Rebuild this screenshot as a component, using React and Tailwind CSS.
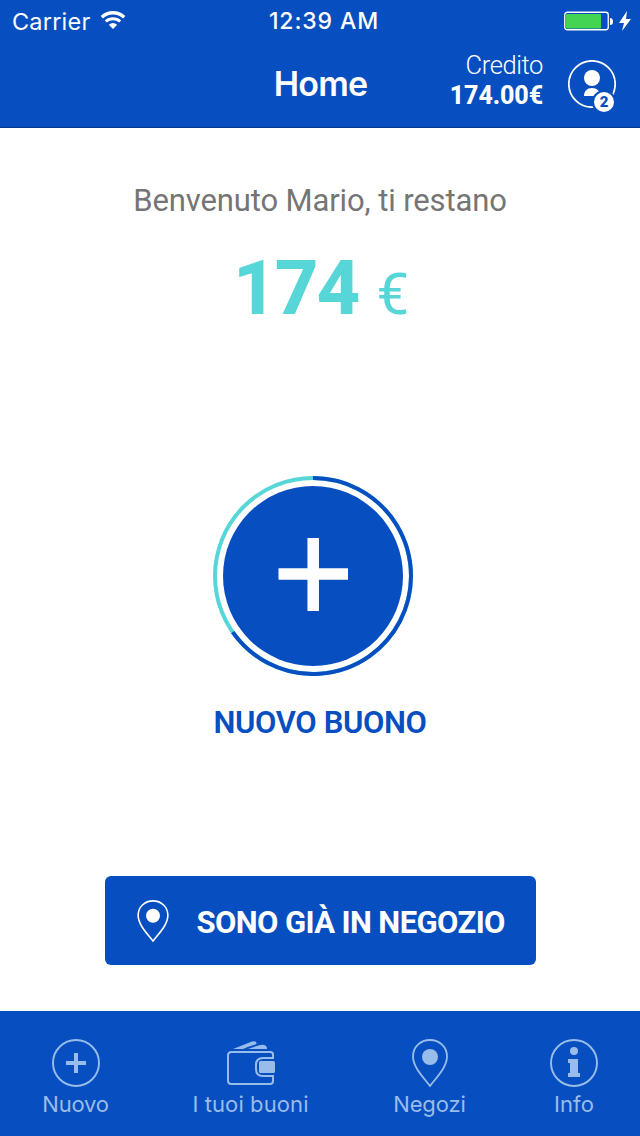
function Pin({ className }) {
  return (
    <svg className={className} viewBox="0 0 36 48" fill="none">
      <path d="M18 47 C12 39 1 28.500 1 17.500 C1 8 8.500 1 18 1 C27.500 1 35 8 35 17.500 C35 28.500 24 39 18 47 Z" stroke="currentColor" strokeWidth="1.800" />
      <circle cx="18" cy="18" r="8" fill="currentColor" />
    </svg>
  );
}

function StatusBar() {
  return (
    <div className="grid h-10 grid-cols-3 items-center pl-3 pr-2 font-['Inter',sans-serif] text-white">
      <div className="flex items-center gap-2.5">
        <span className="text-[23.500px] leading-[41px] tracking-[0.200px]">Carrier</span>
        <svg className="mb-0.5 h-[18px] w-[26px]" viewBox="0 0 26 18" fill="none">
          <path d="M1.800 6.300 A16 16 0 0 1 24.200 6.300" stroke="currentColor" strokeWidth="3.300" />
          <path d="M5.800 10.500 A10.500 10.500 0 0 1 20.200 10.500" stroke="currentColor" strokeWidth="3" />
          <path d="M13 18 L8.800 13.700 Q13 10.300 17.200 13.700 Z" fill="currentColor" />
        </svg>
      </div>
      <span className="whitespace-nowrap pl-1 text-center text-[23px] font-medium leading-[42px] tracking-[0.900px]">12:39 AM</span>
      <div className="flex items-center justify-end">
        <svg className="h-5 w-[50px]" viewBox="0 0 50 20" fill="none">
          <rect x=".75" y="1.250" width="43.500" height="17.500" rx="2.500" stroke="white" strokeWidth="1.300" />
          <rect x="2" y="3" width="35" height="14.500" rx="1" fill="#43d551" />
          <path d="M46 7 Q49 7 49 10.500 Q49 14 46 14 Z" fill="white" />
        </svg>
        <svg className="ml-1 h-5 w-3.5" viewBox="0 0 14 20">
          <path d="M9 0 L1 12 H6 L4 20 L13 8 H8 Z" fill="white" />
        </svg>
      </div>
    </div>
  );
}

function Header() {
  return (
    <header className="h-32 border-b border-[#063888] bg-[#074ec0] text-white">
      <StatusBar />
      <div className="grid h-[87px] grid-cols-[1fr_96px_1fr] items-start">
        <div />
        <h1 className="pl-px pt-[23px] text-center font-['Inter',sans-serif] text-[34px] font-semibold leading-[42px] tracking-[-0.800px]">Home</h1>
        <div className="flex justify-end pr-6 font-['Roboto',sans-serif]">
          <div className="mr-[25px] pt-2.5 text-right">
            <div className="text-[25.500px] font-light leading-[30px] tracking-[-0.400px]">Credito</div>
            <div className="mt-px text-[25px] font-extrabold leading-[30px] tracking-[-0.100px]">174.00€</div>
          </div>
          <div className="relative mt-5 size-12">
            <svg className="size-12" viewBox="0 0 48 48" fill="none">
              <circle cx="24" cy="24" r="23.200" stroke="white" strokeWidth="1.700" />
              <circle cx="24" cy="18" r="8" fill="white" />
              <path d="M16 36 C16 31 19 28 24 28 C29 28 32 31 32 36 Z" fill="white" />
            </svg>
            <span className="absolute left-[24px] top-[30px] flex size-6 items-center justify-center rounded-full border-2 border-[#074ec0] bg-white pt-px text-[15px] font-black text-[#074ec0]">2</span>
          </div>
        </div>
      </div>
    </header>
  );
}

function Tab({ label, children, className }) {
  return (
    <div className={"flex flex-col items-center " + className}>
      <div className="flex h-12 items-center">{children}</div>
      <span className="mt-[3px] whitespace-nowrap text-[22px] leading-[28px]">{label}</span>
    </div>
  );
}

export default function App() {
  return (
    <div className="flex h-[1136px] w-[640px] flex-col overflow-hidden bg-white">
      <Header />
      <main className="flex flex-1 flex-col items-center font-['Roboto',sans-serif]">
        <p className="mt-[53px] whitespace-nowrap text-[31px] leading-10 tracking-[-0.120px] text-[#757575]">Benvenuto Mario, ti restano</p>
        <div className="ml-0.5 mt-[27px] flex h-20 items-baseline gap-[18px] leading-[80px] text-[#57d6d8]">
          <span className="text-[76px] font-extrabold tracking-[-2px]">174</span>
          <span className="text-[58px]">€</span>
        </div>
        <svg className="mr-3.5 mt-[148px] size-[200px] shrink-0" viewBox="0 0 200 200" fill="none">
          <circle cx="100" cy="100" r="98" stroke="#57d6d8" strokeWidth="4" />
          <path d="M100 2 A98 98 0 1 1 19.700 156.200" stroke="#074ec0" strokeWidth="4" />
          <circle cx="100" cy="100" r="90" fill="#074ec0" />
          <path d="M65.500 98 H135 M100.200 62 V135" stroke="white" strokeWidth="11.500" />
        </svg>
        <div className="mt-[27px] whitespace-nowrap text-[31px] font-semibold leading-10 tracking-[-0.350px] text-[#074ec0]">NUOVO BUONO</div>
        <button className="mt-[133px] flex h-[89px] w-[431px] items-center rounded-[6px] bg-[#074ec0] pl-8 text-white">
          <Pin className="h-[42px] w-8" />
          <span className="ml-7 whitespace-nowrap pt-1 text-[31px] font-bold leading-10 tracking-[-0.600px]">SONO GIÀ IN NEGOZIO</span>
        </button>
      </main>
      <nav className="flex h-[125px] shrink-0 bg-[#074ec0] pt-7 font-['Inter',sans-serif] text-[#99bdea]">
        <Tab label="Nuovo" className="w-[151px] tracking-[-0.200px]">
          <svg className="size-12" viewBox="0 0 48 48" fill="none">
            <circle cx="24" cy="24" r="23" stroke="currentColor" strokeWidth="1.900" />
            <path d="M14 24 H34 M24 14 V34" stroke="currentColor" strokeWidth="4" />
          </svg>
        </Tab>
        <Tab label="I tuoi buoni" className="w-[199px] tracking-[0.100px]">
          <svg className="h-12 w-[50px]" viewBox="0 0 50 48" fill="none">
            <path d="M7 10 L26 2.400 Q31 1.500 30.500 5 Q22 7.500 17 10 Z" fill="currentColor" />
            <path d="M22 10 Q35 5 38 6 Q41 6.500 41 10 Z" fill="currentColor" />
            <path d="M47 20 V15.500 Q47 13 44.500 13 H5.500 Q2 13 2 16.500 V41.500 Q2 45 5.500 45 H44 Q47 45 47 42 V37 H37 Q30 37 30 30 V26 Q30 19 37 19 H47" stroke="currentColor" strokeWidth="2" />
            <rect x="33" y="22" width="16" height="12" rx="1.500" fill="currentColor" />
          </svg>
        </Tab>
        <Tab label="Negozi" className="w-[159px] tracking-[-0.100px]">
          <Pin className="h-12 w-9" />
        </Tab>
        <Tab label="Info" className="w-[130px] tracking-[0.100px]">
          <svg className="size-12" viewBox="0 0 48 48" fill="none">
            <circle cx="24" cy="24" r="23" stroke="currentColor" strokeWidth="1.900" />
            <circle cx="24" cy="12" r="4" fill="currentColor" />
            <path d="M18 20 H28 V34 H30 V38 H18 V34 H20 V24 H18 Z" fill="currentColor" />
          </svg>
        </Tab>
      </nav>
    </div>
  );
}
